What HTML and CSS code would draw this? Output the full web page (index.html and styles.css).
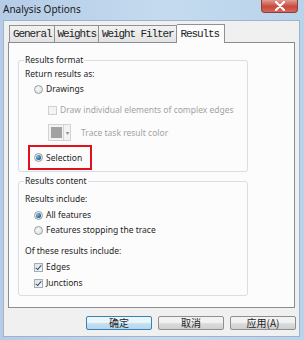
FILE: index.html
```html
<!DOCTYPE html>
<html lang="en">
<head>
  <meta charset="UTF-8" />
  <title>Analysis Options</title>
  <link rel="stylesheet" href="styles.css">
</head>
<body>

<div class="window">
  <div class="titlebar">
    <span class="title">Analysis Options</span>
    <div class="close">
      <svg width="12" height="10" viewBox="0 0 12 10"><path d="M2 1 L10 9 M10 1 L2 9" stroke="#fff" stroke-width="2.2" stroke-linecap="round"/></svg>
    </div>
  </div>

  <div class="client">
    <!-- tabs -->
    <div class="tabs">
      <div class="tab">General</div>
      <div class="tab">Weights</div>
      <div class="tab">Weight Filter</div>
      <div class="tab active">Results</div>
    </div>

    <div class="panel">
      <fieldset class="group g1">
        <legend>Results format</legend>
        <div class="row r-return">Return results as:</div>
        <div class="row opt r-draw"><span class="radio"></span>Drawings</div>
        <div class="row opt sub disabled r-check"><span class="check"></span>Draw individual elements of complex edges</div>
        <div class="row sub disabled r-color">
          <span class="swatch"><span class="fill"></span><span class="drop">&#9662;</span></span>
          Trace task result color
        </div>
        <div class="highlight">
          <div class="row opt"><span class="radio on"></span>Selection</div>
        </div>
      </fieldset>

      <fieldset class="group g2">
        <legend>Results content</legend>
        <div class="row r-inc">Results include:</div>
        <div class="row opt r-all"><span class="radio on"></span>All features</div>
        <div class="row opt r-stop"><span class="radio"></span>Features stopping the trace</div>
        <div class="row r-of">Of these results include:</div>
        <div class="row opt r-edges"><span class="check on"></span>Edges</div>
        <div class="row opt r-junc"><span class="check on"></span>Junctions</div>
      </fieldset>
    </div>

    <div class="buttons">
      <button class="btn default">确定</button>
      <button class="btn">取消</button>
      <button class="btn">应用(A)</button>
    </div>
  </div>
</div>

</body>
</html>
```

FILE: styles.css
```css
body { margin: 0; padding: 0; background: #fff; font-family: "Noto Sans", "Open Sans", sans-serif; font-size: 8.5px; color: #1e1e1e; }
.window { width: 304px; height: 340px; box-sizing: border-box; background: linear-gradient(90deg, #b4cce6, #c4dbef 55%, #b9d3ea); display: flex; flex-direction: column; padding: 0 4px 3px 3px; }
.titlebar { height: 20px; display: flex; justify-content: space-between; align-items: flex-start; }
.title { font-size: 10px; line-height: 18px; color: #1b1b1b; margin-left: 0; }
.close { width: 37px; height: 13px; margin-right: 2px; background: linear-gradient(#e29a90, #c9483c 55%, #d4685c); border: 1px solid #8a4038; border-top: none; border-radius: 0 0 4px 4px; display: flex; justify-content: center; align-items: center; box-sizing: border-box; }
.client { flex: 1; background: #f0f0f0; border: 1px solid #9fb4cc; display: flex; flex-direction: column; }

.tabs { display: flex; margin: 3px 0 0 5px; align-items: flex-end; height: 18px; }
.tab { font-family: "Liberation Mono", monospace; font-size: 11px; letter-spacing: -1.1px; height: 16px; line-height: 16px; padding: 0 2px 0 3px; border: 1px solid #8e9298; border-bottom: none; border-right: none; background: linear-gradient(#f2f2f2, #e3e3e3); color: #222; margin-bottom: 0; }
.tab:nth-child(3) { border-right: 1px solid #8e9298; }
.tab.active { background: #fcfcfc; height: 18px; line-height: 18px; margin-bottom: -1px; position: relative; z-index: 1; padding: 0 5px 0 4px; border-right: 1px solid #8e9298; border-left: none; }

.panel { height: 266px; margin: 0 4px 0 4px; background: #fcfcfc; border: 1px solid #898c95; padding: 11px 0 0 9px; box-sizing: border-box; }

.group { width: 230px; box-sizing: border-box; margin: 0; padding: 0 0 0 6px; border: 1px solid #d5dfe5; border-radius: 3px; }
.group legend { padding: 0 1px; margin-left: -1px; line-height: 12px; color: #1e1e1e; }
.g1 { padding-bottom: 1px; height: 118px; }
.g2 { margin-top: 3px; height: 121px; }

.row { display: flex; align-items: center; height: 12px; line-height: 12px; white-space: nowrap; }
.opt { padding-left: 9px; }
.sub { padding-left: 23px; }
.disabled { color: #a3a3a3; }

.r-return { margin-top: 2px; }
.r-draw { margin-top: 3px; }
.r-check { margin-top: 9px; }
.r-color { margin-top: 8px; height: 17px; }
.highlight { margin: 4px 0 0 3px; width: 64px; height: 25px; box-sizing: border-box; border: 2px solid #e0121c; display: flex; align-items: center; }
.highlight .opt { padding-left: 4px; }

.r-inc { margin-top: 6px; }
.r-all { margin-top: 4px; }
.r-stop { margin-top: 3px; }
.r-of { margin-top: 9px; }
.r-edges { margin-top: 4px; }
.r-junc { margin-top: 4px; }

.radio { width: 9px; height: 9px; border-radius: 50%; border: 1px solid #9a9ea3; background: radial-gradient(circle at 40% 40%, #fafafa, #d6d8da); margin-right: 3px; box-sizing: border-box; position: relative; flex: none; }
.radio.on::after { content: ""; position: absolute; left: 1px; top: 1px; width: 5px; height: 5px; border-radius: 50%; background: radial-gradient(circle at 35% 35%, #7fc2e8, #1b5c8c 70%); }
.check { width: 9px; height: 9px; border: 1px solid #a7aaae; background: linear-gradient(#e2e4e7, #f6f6f6); margin-right: 3px; box-sizing: border-box; position: relative; flex: none; }
.disabled .check { border-color: #d0d0d0; background: #f4f4f4; }
.check.on::after { content: ""; position: absolute; left: 2px; top: 0px; width: 2px; height: 5px; border: solid #2c4f78; border-width: 0 1.5px 1.5px 0; transform: rotate(40deg); }

.swatch { display: flex; height: 17px; margin-right: 10px; border: 1px solid #d3d3d3; box-sizing: border-box; background: #f3f3f3; }
.swatch .fill { width: 11px; margin: 2px 1px 2px 2px; background: #a2a2a2; }
.swatch .drop { width: 6px; border-left: 1px solid #d3d3d3; font-size: 6px; color: #888; display: flex; align-items: center; justify-content: center; }

.buttons { display: flex; justify-content: flex-end; gap: 6px; margin: 8px 3px 0 0; }
.btn { width: 66px; height: 14px; padding: 0; font-family: "Noto Sans CJK SC", sans-serif; font-size: 10px; line-height: 12px; color: #1e1e1e; border: 1px solid #8e8f8f; border-radius: 2px; background: linear-gradient(#f2f2f2 45%, #dcdcdc 55%, #cfcfcf); }
.btn.default { border-color: #3c7fb1; background: linear-gradient(#eaf5fc 45%, #c5e0f2 55%, #b3d6ee); }
```
